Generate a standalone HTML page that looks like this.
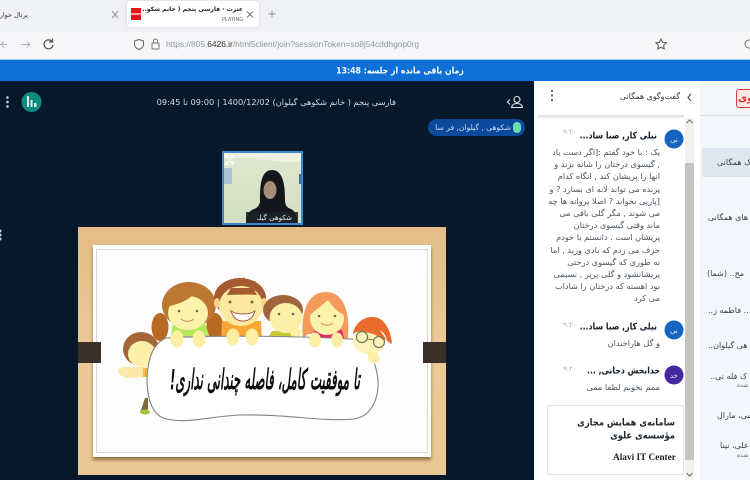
<!DOCTYPE html>
<html lang="fa">
<head>
<meta charset="utf-8">
<title>Recreation</title>
<style>
html,body{margin:0;padding:0;width:750px;height:480px;overflow:hidden;background:#fff}
#w{position:relative;width:750px;height:480px;overflow:hidden;font-family:"DejaVu Sans","Liberation Sans",sans-serif;filter:blur(.35px)}
.b{position:absolute}
.t{position:absolute;white-space:nowrap;direction:rtl;line-height:12px}
.l{position:absolute;white-space:nowrap;line-height:12px}
.m{font-size:8.2px;color:#4a545e;height:12px}
.n{font-size:7.8px;color:#141c26;font-weight:bold;transform:scaleY(1.2)}
.s{font-size:8px;color:#39424c}
.c{font-size:8.4px;font-weight:bold;color:#20282f;transform:scaleY(1.15)}
.tm{position:absolute;font-size:7px;color:#a9b2ba;white-space:nowrap;line-height:10px}
svg{position:absolute;left:0;top:0}
</style>
</head>
<body>
<div id="w">
  <!-- browser chrome -->
  <div class="b" style="left:0;top:0;width:750px;height:32px;background:linear-gradient(#eef0f3,#f0f2f5)"></div>
  <div class="b" style="left:0;top:32px;width:750px;height:27px;background:#f6f6f8"></div>
  <div class="b" style="left:127px;top:1px;width:132px;height:26px;background:#fff;border-radius:4px;box-shadow:0 0 3px rgba(0,0,0,.12)"></div>
  <div class="b" style="left:131px;top:8px;width:10px;height:12px;background:#e8141c"></div>
  <div class="b" style="left:131px;top:13px;width:10px;height:2px;background:#f6a0a0"></div>
  <div class="t" style="right:722px;top:9px;font-size:6.5px;color:#333">پرتال خوارزمی</div>
  <div class="t" style="right:507px;top:4px;font-size:6px;font-weight:bold;color:#222">عترت - فارسی پنجم ( خانم شکو..</div>
  <div class="l" style="left:222px;top:14px;font-size:5px;color:#666">PLAYING</div>
  <div class="l" style="left:166px;top:38px;font-size:8.35px;color:#8d98a3;font-family:'Liberation Sans',sans-serif">https://805.<span style="color:#333">6426.ir</span>/html5client/join?sessionToken=so8j54cddhgop0rg</div>
  <!-- blue bar -->
  <div class="b" style="left:0;top:59px;width:750px;height:22px;background:#0e6fd6;border-top:1px solid #9fd6f5;box-sizing:border-box"></div>
  <div class="t" style="left:310px;width:180px;text-align:center;top:65px;font-size:7.8px;font-weight:bold;color:#fff;transform:scaleY(1.15)">زمان باقی مانده از جلسه: 13:48</div>
  <!-- dark main -->
  <div class="b" style="left:0;top:81px;width:534px;height:399px;background:#06182a"></div>
  <div class="t" style="left:150px;width:246px;top:96px;font-size:8.25px;color:#d5dbe2;text-align:right">فارسی پنجم ( خانم شکوهی گیلوان) 1400/12/02 | 09:00 تا 09:45</div>
  <!-- pill -->
  <div class="b" style="left:428px;top:119px;width:97px;height:17px;border-radius:9px;background:#0e4a9c"></div>
  <div class="b" style="left:513px;top:122px;width:8px;height:11px;border-radius:4px;background:#6fdcb0"></div>
  <div class="t" style="right:239px;top:122px;font-size:7.6px;color:#c9dcf2">شکوهی , گیلوان, فر سا</div>
  <!-- video -->
  <div class="b" style="left:222px;top:151px;width:81px;height:74px;background:#3a88cc"></div>
  <div class="b" style="left:224px;top:153px;width:77px;height:70px;background:linear-gradient(#dfe6cf,#d4dfc0)"></div>

  <!-- slide -->
  <div class="b" style="left:78px;top:227px;width:368px;height:248px;background:linear-gradient(#e3bd85,#ebca97 50%,#e9c692)"></div>
  <div class="b" style="left:93px;top:245px;width:338px;height:212px;background:#fff;box-shadow:0 3px 3px rgba(70,50,20,.55)"></div>
  <div class="b" style="left:96px;top:249px;width:332px;height:204px;border:1px solid #d5d9d5;box-sizing:border-box;background:#fdfdfd"></div>
  <div class="b" style="left:78px;top:342px;width:23px;height:21px;background:#3a3027"></div>
  <div class="b" style="left:423px;top:342px;width:23px;height:21px;background:#3a3027"></div>

  <!-- chat panel -->
  <div class="b" style="left:534px;top:81px;width:166px;height:399px;background:#fff"></div>
  <div class="b" style="left:538px;top:115px;width:146px;height:4px;background:linear-gradient(#d8d8d8,#fff);opacity:.9"></div>
  <div class="t" style="right:70px;top:91px;font-size:7.9px;color:#2f3943">گفت‌وگوی همگانی</div>
  <!-- scrollbar -->
  <div class="b" style="left:685px;top:118px;width:9px;height:362px;background:#f1f1f1"></div>
  <div class="b" style="left:685px;top:163px;width:9px;height:297px;background:#c4c4c4"></div>

  <!-- msg 1 -->
  <div class="t n" style="right:93px;top:130px">نیلی کار, صبا ساد...</div>
  <div class="tm" style="left:563px;top:127px">۹:۲۰</div>
  <div class="t m" style="right:90px;top:146px">یک : با خود گفتم :[اگر دست باد</div>
  <div class="t m" style="right:90px;top:158px">, گیسوی درختان را شانه بزند و</div>
  <div class="t m" style="right:90px;top:170px">انها را پریشان کند , انگاه کدام</div>
  <div class="t m" style="right:90px;top:183px">پرنده می تواند لانه ای بسازد ? و</div>
  <div class="t m" style="right:90px;top:195px">[پاریی بخواند ? اصلا پروانه ها چه</div>
  <div class="t m" style="right:90px;top:207px">می شوند , مگر گلی باقی می</div>
  <div class="t m" style="right:90px;top:219px">ماند وقتی گیسوی درختان</div>
  <div class="t m" style="right:90px;top:231px">پریشان است . دانستم با خودم</div>
  <div class="t m" style="right:90px;top:244px">حرف می زدم که بادی وزید , اما</div>
  <div class="t m" style="right:90px;top:256px">نه طوری که گیسوی درختی</div>
  <div class="t m" style="right:90px;top:268px">پریشانشود و گلی پرپر , نسیمی</div>
  <div class="t m" style="right:90px;top:280px">بود اهسته که درختان را شاداب</div>
  <div class="t m" style="right:90px;top:292px">می کرد</div>
  <!-- msg 2 -->
  <div class="t n" style="right:93px;top:321px">نیلی کار, صبا ساد...</div>
  <div class="tm" style="left:563px;top:320px">۹:۲۰</div>
  <div class="t m" style="right:90px;top:337px">و گل هاراخندان</div>
  <!-- msg 3 -->
  <div class="t n" style="right:90px;top:365px">خدابخش دجانی, ...</div>
  <div class="tm" style="left:563px;top:364px">۹:۲۰</div>
  <div class="t m" style="right:90px;top:381px">ممم بخوبم لطفا ممی</div>
  <!-- card -->
  <div class="b" style="left:547px;top:405px;width:137px;height:70px;border:1px solid #e2e4e6;box-sizing:border-box;background:#fff"></div>
  <div class="t c" style="right:75px;top:416px">سامانه‌ی همایش مجازی</div>
  <div class="t c" style="right:75px;top:429px">مؤسسه‌ی علوی</div>
  <div class="l" style="left:613px;top:452px;font-size:9.300px;font-weight:bold;color:#222;font-family:'Liberation Serif',serif">Alavi IT Center</div>

  <!-- side panel -->
  <div class="b" style="left:700px;top:81px;width:50px;height:399px;background:#f3f6fa"></div>
  <div class="b" style="left:700px;top:81px;width:50px;height:35px;background:#f5f6f7;border-bottom:1px solid #dde0e3;box-sizing:border-box"></div>
  <div class="b" style="left:736px;top:89px;width:20px;height:19px;border:1.5px solid #e0393e;border-radius:3px;box-sizing:border-box;background:#fde8e4"></div>
  <div class="l" style="left:738px;top:93px;font-size:10px;font-weight:bold;color:#e0252b">وی</div>
  <div class="b" style="left:702px;top:148px;width:48px;height:29px;background:#dfe6f0"></div>
  <div class="t s" style="left:717px;top:157px">ک همگانی</div>
  <div class="t s" style="left:708px;top:212px">های همگانی</div>
  <div class="t s" style="left:707px;top:268px">مح.. (شما)</div>
  <div class="t s" style="left:708px;top:305px">.. فاطمه ز..</div>
  <div class="t s" style="left:708px;top:340px">هی گیلوان..</div>
  <div class="t s" style="left:710px;top:371px">ک فله نی..</div>
  <div class="t" style="left:737px;top:380px;font-size:6px;color:#666">شده</div>
  <div class="t s" style="left:717px;top:410px">می، مارال</div>
  <div class="t s" style="left:720px;top:440px">علی، نینا</div>
  <div class="t" style="left:737px;top:450px;font-size:6px;color:#666">شده</div>

  <!-- vector overlay -->
  <svg width="750" height="480" viewBox="0 0 750 480">
    <!-- tab icons -->
    <g fill="none" stroke="#6c7278" stroke-width="1">
      <path d="M112 11l6 7M118 11l-6 7" stroke="#999"/>
      <path d="M247 11.500l6 6M253 11.500l-6 6"/>
      <path d="M272 10.500v7M268.500 14h7" stroke="#8f959b"/>
      <path d="M0 44.500h7M1 44.500l3-3M1 44.500l3 3" stroke="#aeb4ba"/>
      <path d="M21 44.500h9M30 44.500l-3-3M30 44.500l-3 3" stroke="#aeb4ba"/>
      <path d="M52 41.500a4.500 4.500 0 1 0 1 3.500M52.500 38.500v3.500h-3.500" stroke="#555" stroke-width="1.200"/>
      <path d="M139 39.500l4.500 1.500v3.500c0 2.500-2 4-4.500 5-2.500-1-4.500-2.500-4.500-5v-3.500z" stroke="#666"/>
      <rect x="152" y="43" width="7" height="6" rx="1" stroke="#777"/>
      <path d="M153.500 43v-2a2 2 0 0 1 4 0v2" stroke="#777"/>
      <path d="M661 39l1.600 3.300 3.600.5-2.600 2.500.6 3.600-3.200-1.700-3.200 1.700.6-3.600-2.600-2.500 3.600-.5z" stroke="#555"/>
      <circle cx="749" cy="44" r="4" stroke="#666"/>
    </g>
    <!-- dark area icons -->
    <g fill="#c8d2dc">
      <circle cx="7.500" cy="97.500" r="1.300"/><circle cx="7.500" cy="102" r="1.300"/><circle cx="7.500" cy="106.500" r="1.300"/>
      <circle cx="0" cy="231" r="1.500"/><circle cx="0" cy="235" r="1.500"/><circle cx="0" cy="239" r="1.500"/>
    </g>
    <circle cx="31.500" cy="102" r="10" fill="#0f8a80"/>
    <g fill="#d8eee9">
      <rect x="27" y="96" width="2" height="11"/><rect x="30.500" y="100" width="2" height="7"/><rect x="34" y="103" width="2.500" height="4"/>
    </g>
    <g fill="none" stroke="#dfe4ea" stroke-width="1.100">
      <circle cx="517" cy="99.500" r="3"/>
      <path d="M511.500 107.500c.5-3 3-4 5.500-4s5 1 5.500 4z"/>
      <path d="M510 99.500l-2.500 2.500 2.500 2.500"/>
    </g>
    <!-- video scene -->
    <g>
      <path d="M224 153h77v8c-18 3-30-1-45-3h-32z" fill="#eef0e2"/>
      <rect x="224" y="168" width="8" height="16" fill="#a9c3d6"/>
      <rect x="299" y="174" width="2" height="10" fill="#3b6f93"/>
      <path d="M246 223c0-8 3-12 8-14 3-1 5-3 6-7 0-14 0-32 12-32 12 0 13 18 13 30 0 5 2 8 6 9 4 2 6 6 6 14z" fill="#14161c"/>
      <ellipse cx="270" cy="190" rx="6.500" ry="9" fill="#a88c7a"/>
      <rect x="246" y="212" width="52" height="11" fill="#1b2228" opacity=".9"/>
      <g fill="#fff" opacity=".95">
        <path d="M225 155h4l-1.500 1.500 2 2-1 1-2-2-1.500 1.500zM234 155v4l-1.500-1.500-2 2-1-1 2-2-1.500-1.500zM225 165v-4l1.500 1.500 2-2 1 1-2 2 1.500 1.500zM234 165h-4l1.500-1.500-2-2 1-1 2 2 1.500-1.500z"/>
      </g>
    </g>
    <text x="292" y="220" font-size="7" fill="#e6e8ea" text-anchor="start" direction="rtl" font-family="DejaVu Sans">شکوهی گیلـ</text>
    <!-- chat icons -->
    <g fill="#555">
      <circle cx="552" cy="91" r="1.100"/><circle cx="552" cy="95.500" r="1.100"/><circle cx="552" cy="100" r="1.100"/>
    </g>
    <path d="M691 94l-3 3.500 3 3.500" fill="none" stroke="#444" stroke-width="1.100"/>
    <path d="M686.500 123l3-3 3 3M686.500 473l3 3 3-3" fill="none" stroke="#777" stroke-width="1.200"/>
    <circle cx="674" cy="139" r="9.500" fill="#1565c0"/>
    <circle cx="674" cy="330" r="9.500" fill="#1565c0"/>
    <circle cx="674" cy="375" r="9.500" fill="#4527a0"/>
    <g font-size="7" fill="#e6eef8" text-anchor="middle" font-family="DejaVu Sans">
      <text x="674" y="142">نی</text><text x="674" y="333">نی</text><text x="674" y="378">خد</text>
    </g>

    <!-- kids -->
    <!-- left kid -->
    <ellipse cx="141" cy="349" rx="18" ry="17" fill="#a5653a"/>
    <ellipse cx="142" cy="354" rx="14" ry="13" fill="#fbf0a8"/>
    <path d="M117 369l8-2 22 0 0 10-20 1-7-3z" fill="#fbe8a8"/>
    <rect x="143" y="368" width="8" height="9" fill="#f3b73b"/>
    <path d="M145 398l3 0 0 10-1 5-7 0z" fill="#7c6a3c"/>
    <ellipse cx="145" cy="412" rx="5" ry="2.500" fill="#9fc83a"/>
    <!-- girl 1 -->
    <ellipse cx="160" cy="327" rx="8.500" ry="14" fill="#b96a22"/>
    <ellipse cx="215" cy="327" rx="8.500" ry="14" fill="#b96a22"/>
    <ellipse cx="189" cy="305" rx="27" ry="23" fill="#bc7830"/>
    <path d="M170 341l3-18 32 0 6 18z" fill="#b5e85a"/>
    <ellipse cx="188" cy="313" rx="20" ry="17" fill="#fbf3ac"/>
    <path d="M170 306c8-2 18-5 26-14 3 6 10 12 18 14 -2-14-12-21-26-21-12 0-20 9-18 21z" fill="#bc7830"/>
    <path d="M181 319c4 3 9 3 13 0" fill="none" stroke="#c98a5a" stroke-width="1"/>
    <circle cx="179" cy="311" r="1.300" fill="#6c6c50"/><circle cx="197" cy="311" r="1.300" fill="#6c6c50"/>
    <!-- boy -->
    <path d="M221 341l1-20 39 0 1 20z" fill="#f6a832"/>
    <ellipse cx="240" cy="298" rx="26" ry="20" fill="#a55a30"/>
    <path d="M232 279l6 5 6-7 4 7 8-3-4 8z" fill="#a55a30"/>
    <ellipse cx="241" cy="306" rx="22" ry="20" fill="#fbe9a0"/>
    <ellipse cx="217" cy="303" rx="3" ry="5" fill="#f7d58a"/><ellipse cx="264" cy="303" rx="3" ry="5" fill="#f7d58a"/>
    <path d="M227 295c8 0 18-1 30 0l-4-7-22 0z" fill="#a55a30"/>
    <path d="M231 311c6 4 18 4 24 0-2 7-6 10-12 10s-10-3-12-10z" fill="#fff" stroke="#a8584a" stroke-width="1"/>
    <circle cx="230" cy="302" r="1.500" fill="#6c6c50"/><circle cx="252" cy="302" r="1.500" fill="#6c6c50"/>
    <!-- small boy -->
    <path d="M268 338l4-7 17 0 4 7z" fill="#c8c83a"/>
    <ellipse cx="283" cy="310" rx="20" ry="15" fill="#a0653c"/>
    <ellipse cx="286" cy="318" rx="16.500" ry="15" fill="#fbf0a8"/>
    <circle cx="279" cy="314" r="1.300" fill="#6c6c50"/><circle cx="293" cy="314" r="1.300" fill="#6c6c50"/>
    <path d="M292 337l-4-8 6-2 8 3-2 7z" fill="#fdeea6"/>
    <!-- girl 2 -->
    <path d="M303 338c-2-20 2-46 23-46 21 0 25 28 21 52l-7-2 -2-8-30 0z" fill="#f39a5c"/>
    <path d="M311 342l3-11 28-1 3 12z" fill="#e8286a"/>
    <ellipse cx="327" cy="318" rx="17" ry="17" fill="#fbf3ac"/>
    <path d="M310 315c4-4 14-10 18-16 3 6 8 12 16 16-1-12-8-19-18-19-9 0-16 8-16 19z" fill="#f39a5c"/>
    <circle cx="319" cy="316" r="1.300" fill="#6c6c50"/><circle cx="335" cy="316" r="1.300" fill="#6c6c50"/>
    <path d="M321 323c4 3 8 3 12 0" fill="none" stroke="#d08a5a" stroke-width="1"/>
    <!-- bubble -->
    <path d="M166 338C210 335 300 336 350 339C368 341 376 362 378 380C379 398 372 416 354 419C320 422 290 414 240 415C210 416 185 425 163 418C150 412 147 395 147 378C148 360 152 344 166 338Z" fill="#fff" stroke="#7f8484" stroke-width="1.100"/>
    <!-- hands over bubble -->
    <ellipse cx="177" cy="339" rx="6.500" ry="8.500" fill="#fdeea6"/><ellipse cx="199" cy="339" rx="6.500" ry="8.500" fill="#fdeea6"/>
    <ellipse cx="233" cy="337" rx="6.500" ry="8.500" fill="#fdeea6"/><ellipse cx="252" cy="337" rx="6.500" ry="8.500" fill="#fdeea6"/>
    <ellipse cx="315" cy="340" rx="6" ry="7.500" fill="#fdeea6"/><ellipse cx="337" cy="340" rx="6" ry="7.500" fill="#fdeea6"/>
    <!-- glasses kid over bubble -->
    <path d="M353 334c1-10 11-18 21-17 10 1 17 12 18 27l-5-3c-1-6-4-10-10-12-8-2-16 0-24 5z" fill="#ea6c2c"/>
    <ellipse cx="369" cy="341" rx="16" ry="13" fill="#fbf3b8"/>
    <path d="M354 332c7-6 17-7 25-3l7 10-3 1c-6-6-17-9-29-8z" fill="#ea6c2c"/>
    <circle cx="362" cy="337" r="5.500" fill="none" stroke="#77775a" stroke-width="1.200"/>
    <circle cx="379" cy="342" r="5.500" fill="none" stroke="#77775a" stroke-width="1.200"/>
    <path d="M367 339l7 1" stroke="#77775a" stroke-width="1"/>
    <path d="M367 352l10 0 3 8-5 4-6-3z" fill="#fdeea6"/>
    <text x="360" y="389" font-size="28" font-style="italic" font-weight="bold" fill="#0c0c0c" direction="rtl" text-anchor="start" textLength="190" lengthAdjust="spacingAndGlyphs" font-family="DejaVu Sans">تا موفقیت کامل، فاصله چندانی نداری!</text>
  </svg>
</div>
</body>
</html>
